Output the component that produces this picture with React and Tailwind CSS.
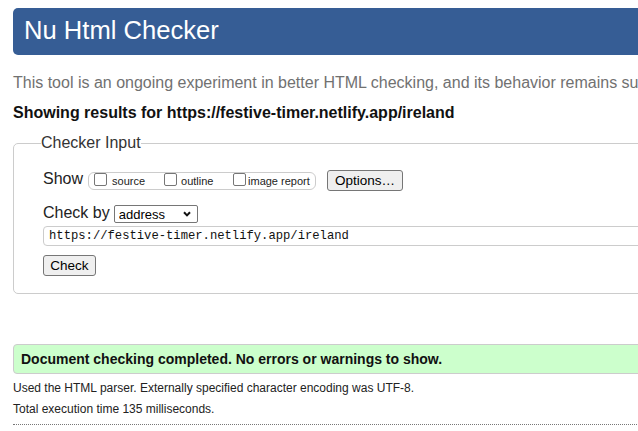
export default function App() {
  const url = "https://festive-timer.netlify.app/ireland";

  return (
    <div className="w-[638px] h-[431px] overflow-hidden bg-white font-['Liberation_Sans',Arial,sans-serif] text-[#222]">
      <div className="pl-[13px] pt-[8px] w-[760px]">
        {/* title bar */}
        <div className="h-[47px] w-[720px] bg-[#365d95] rounded-[5px] flex items-center pl-[11px] pb-[3px]">
          <h1 className="text-white text-[25.6px] leading-[30px]">Nu Html Checker</h1>
        </div>

        <p className="mt-[19px] text-[16px] leading-[18px] text-[#717171] whitespace-nowrap">
          This tool is an ongoing experiment in better HTML checking, and its behavior remains subject to change
        </p>

        <p className="mt-[12px] text-[16px] leading-[18px] font-bold text-[#111] whitespace-nowrap">
          Showing results for {url}
        </p>

        <fieldset className="mt-[12px] w-[720px] border border-[#cccccc] rounded-[5px] pl-[29px] pt-[18px] pb-[17px]">
          <legend className="ml-[-2px] px-0 text-[16px] leading-[18px] text-[#333]">Checker Input</legend>

          <div className="flex items-start h-[21px]">
            <span className="text-[16px] leading-[18px]">Show</span>
            <div className="ml-[5px] mt-[2px] h-[18px] w-[228px] border border-[#cccccc] rounded-[6px] flex items-start pl-[5px]">
              <input type="checkbox" className="appearance-none m-0 w-[13px] h-[13px] border border-[#767676] rounded-[2px] bg-white" />
              <label className="ml-[5px] mt-[2px] text-[11px] leading-[13px] w-[32px]">source</label>
              <input type="checkbox" className="ml-[20px] appearance-none m-0 w-[13px] h-[13px] border border-[#767676] rounded-[2px] bg-white" />
              <label className="ml-[4px] mt-[2px] text-[11px] leading-[13px] w-[32px]">outline</label>
              <input type="checkbox" className="ml-[20px] appearance-none m-0 w-[13px] h-[13px] border border-[#767676] rounded-[2px] bg-white" />
              <label className="ml-[2px] mt-[2px] text-[11px] leading-[13px] whitespace-nowrap">image report</label>
            </div>
            <button className="ml-[11px] w-[76px] h-[21px] bg-[#efefef] border border-[#767676] rounded-[3px] text-[13.5px] leading-[15px] text-black">
              Options…
            </button>
          </div>

          <div className="mt-[13px] flex items-start h-[18px]">
            <span className="text-[16px] leading-[18px]">Check by</span>
            <div className="relative ml-[4px] mt-[1px] h-[18px]">
              <select className="block appearance-none w-[84px] h-[18px] border border-[#767676] rounded-[2px] bg-white pl-[4px] text-[13px] leading-[15px] text-black">
                <option>address</option>
                <option>file upload</option>
                <option>text input</option>
              </select>
              <svg className="absolute right-[7px] top-[6px] pointer-events-none" width="8" height="6" viewBox="0 0 8 6">
                <path d="M1 1.2 L4 4.4 L7 1.2" fill="none" stroke="#111" strokeWidth="2" />
              </svg>
            </div>
          </div>

          <input
            type="text"
            defaultValue={url}
            className="mt-[4px] block w-[660px] h-[20px] border border-[#cccccc] rounded-l-[4px] pl-[5px] font-['Liberation_Mono',monospace] text-[12.2px] leading-[14px] text-[#111]"
          />

          <button className="mt-[9px] block w-[53px] h-[21px] bg-[#efefef] border border-[#767676] rounded-[3px] text-[13.5px] leading-[15px] text-black">
            Check
          </button>
        </fieldset>

        <div className="mt-[50px] w-[720px] h-[30px] bg-[#ccffcc] border border-[#cccccc] rounded-[4px] flex items-center pl-[7px]">
          <p className="font-bold text-[14px] leading-[16px] text-[#111]">
            Document checking completed. No errors or warnings to show.
          </p>
        </div>

        <p className="mt-[7px] text-[12px] leading-[14px]">
          Used the HTML parser. Externally specified character encoding was UTF-8.
        </p>
        <p className="mt-[7px] text-[12px] leading-[14px]">Total execution time 135 milliseconds.</p>

        <div className="mt-[8px] w-[720px] border-t border-dotted border-[#777]"></div>
      </div>
    </div>
  );
}
